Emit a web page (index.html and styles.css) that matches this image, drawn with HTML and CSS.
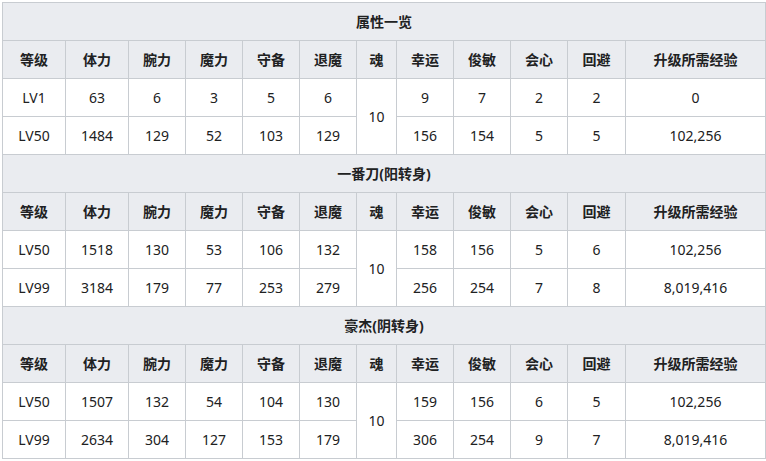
FILE: index.html
```html
<!DOCTYPE html>
<html lang="zh">
<head>
<meta charset="utf-8">
<link rel="stylesheet" href="styles.css">
</head>
<body>
<table class="wikitable">
<colgroup>
<col class="c63"><col class="c63"><col class="c57"><col class="c57"><col class="c57"><col class="c57"><col class="c40"><col class="c57"><col class="c57"><col class="c57"><col class="c58"><col class="c140">
</colgroup>
<tbody>
<tr><th colspan="12" class="title">属性一览</th></tr>
<tr><th>等级</th><th>体力</th><th>腕力</th><th>魔力</th><th>守备</th><th>退魔</th><th>魂</th><th>幸运</th><th>俊敏</th><th>会心</th><th>回避</th><th>升级所需经验</th></tr>
<tr><td>LV1</td><td>63</td><td>6</td><td>3</td><td>5</td><td>6</td><td rowspan="2">10</td><td>9</td><td>7</td><td>2</td><td>2</td><td>0</td></tr>
<tr><td>LV50</td><td>1484</td><td>129</td><td>52</td><td>103</td><td>129</td><td>156</td><td>154</td><td>5</td><td>5</td><td>102,256</td></tr>
<tr><th colspan="12" class="title">一番刀(阳转身)</th></tr>
<tr><th>等级</th><th>体力</th><th>腕力</th><th>魔力</th><th>守备</th><th>退魔</th><th>魂</th><th>幸运</th><th>俊敏</th><th>会心</th><th>回避</th><th>升级所需经验</th></tr>
<tr><td>LV50</td><td>1518</td><td>130</td><td>53</td><td>106</td><td>132</td><td rowspan="2">10</td><td>158</td><td>156</td><td>5</td><td>6</td><td>102,256</td></tr>
<tr><td>LV99</td><td>3184</td><td>179</td><td>77</td><td>253</td><td>279</td><td>256</td><td>254</td><td>7</td><td>8</td><td>8,019,416</td></tr>
<tr><th colspan="12" class="title">豪杰(阴转身)</th></tr>
<tr><th>等级</th><th>体力</th><th>腕力</th><th>魔力</th><th>守备</th><th>退魔</th><th>魂</th><th>幸运</th><th>俊敏</th><th>会心</th><th>回避</th><th>升级所需经验</th></tr>
<tr><td>LV50</td><td>1507</td><td>132</td><td>54</td><td>104</td><td>130</td><td rowspan="2">10</td><td>159</td><td>156</td><td>6</td><td>5</td><td>102,256</td></tr>
<tr><td>LV99</td><td>2634</td><td>304</td><td>127</td><td>153</td><td>179</td><td>306</td><td>254</td><td>9</td><td>7</td><td>8,019,416</td></tr>
</tbody>
</table>
</body>
</html>
```
FILE: styles.css
```css
html, body {
  margin: 0;
  padding: 0;
  background: #ffffff;
}
body {
  padding: 2px 0 0 2px;
  font-family: "Noto Sans", "Noto Sans CJK SC", sans-serif;
  font-size: 14px;
  color: #202122;
}
.wikitable {
  border-collapse: collapse;
  table-layout: fixed;
  width: 764px;
  background: #f8f9fa;
}
.c63 { width: 63px; }
.c57 { width: 57px; }
.c40 { width: 40px; }
.c58 { width: 58px; }
.c140 { width: 140px; }
.wikitable th,
.wikitable td {
  border: 1px solid #c8ccd1;
  height: 38px;
  padding: 0;
  text-align: center;
  vertical-align: middle;
  line-height: 20px;
  box-sizing: border-box;
}
.wikitable td {
  background: #ffffff;
  font-weight: normal;
}
.wikitable th {
  background: #eaecf0;
  font-weight: bold;
}
```
